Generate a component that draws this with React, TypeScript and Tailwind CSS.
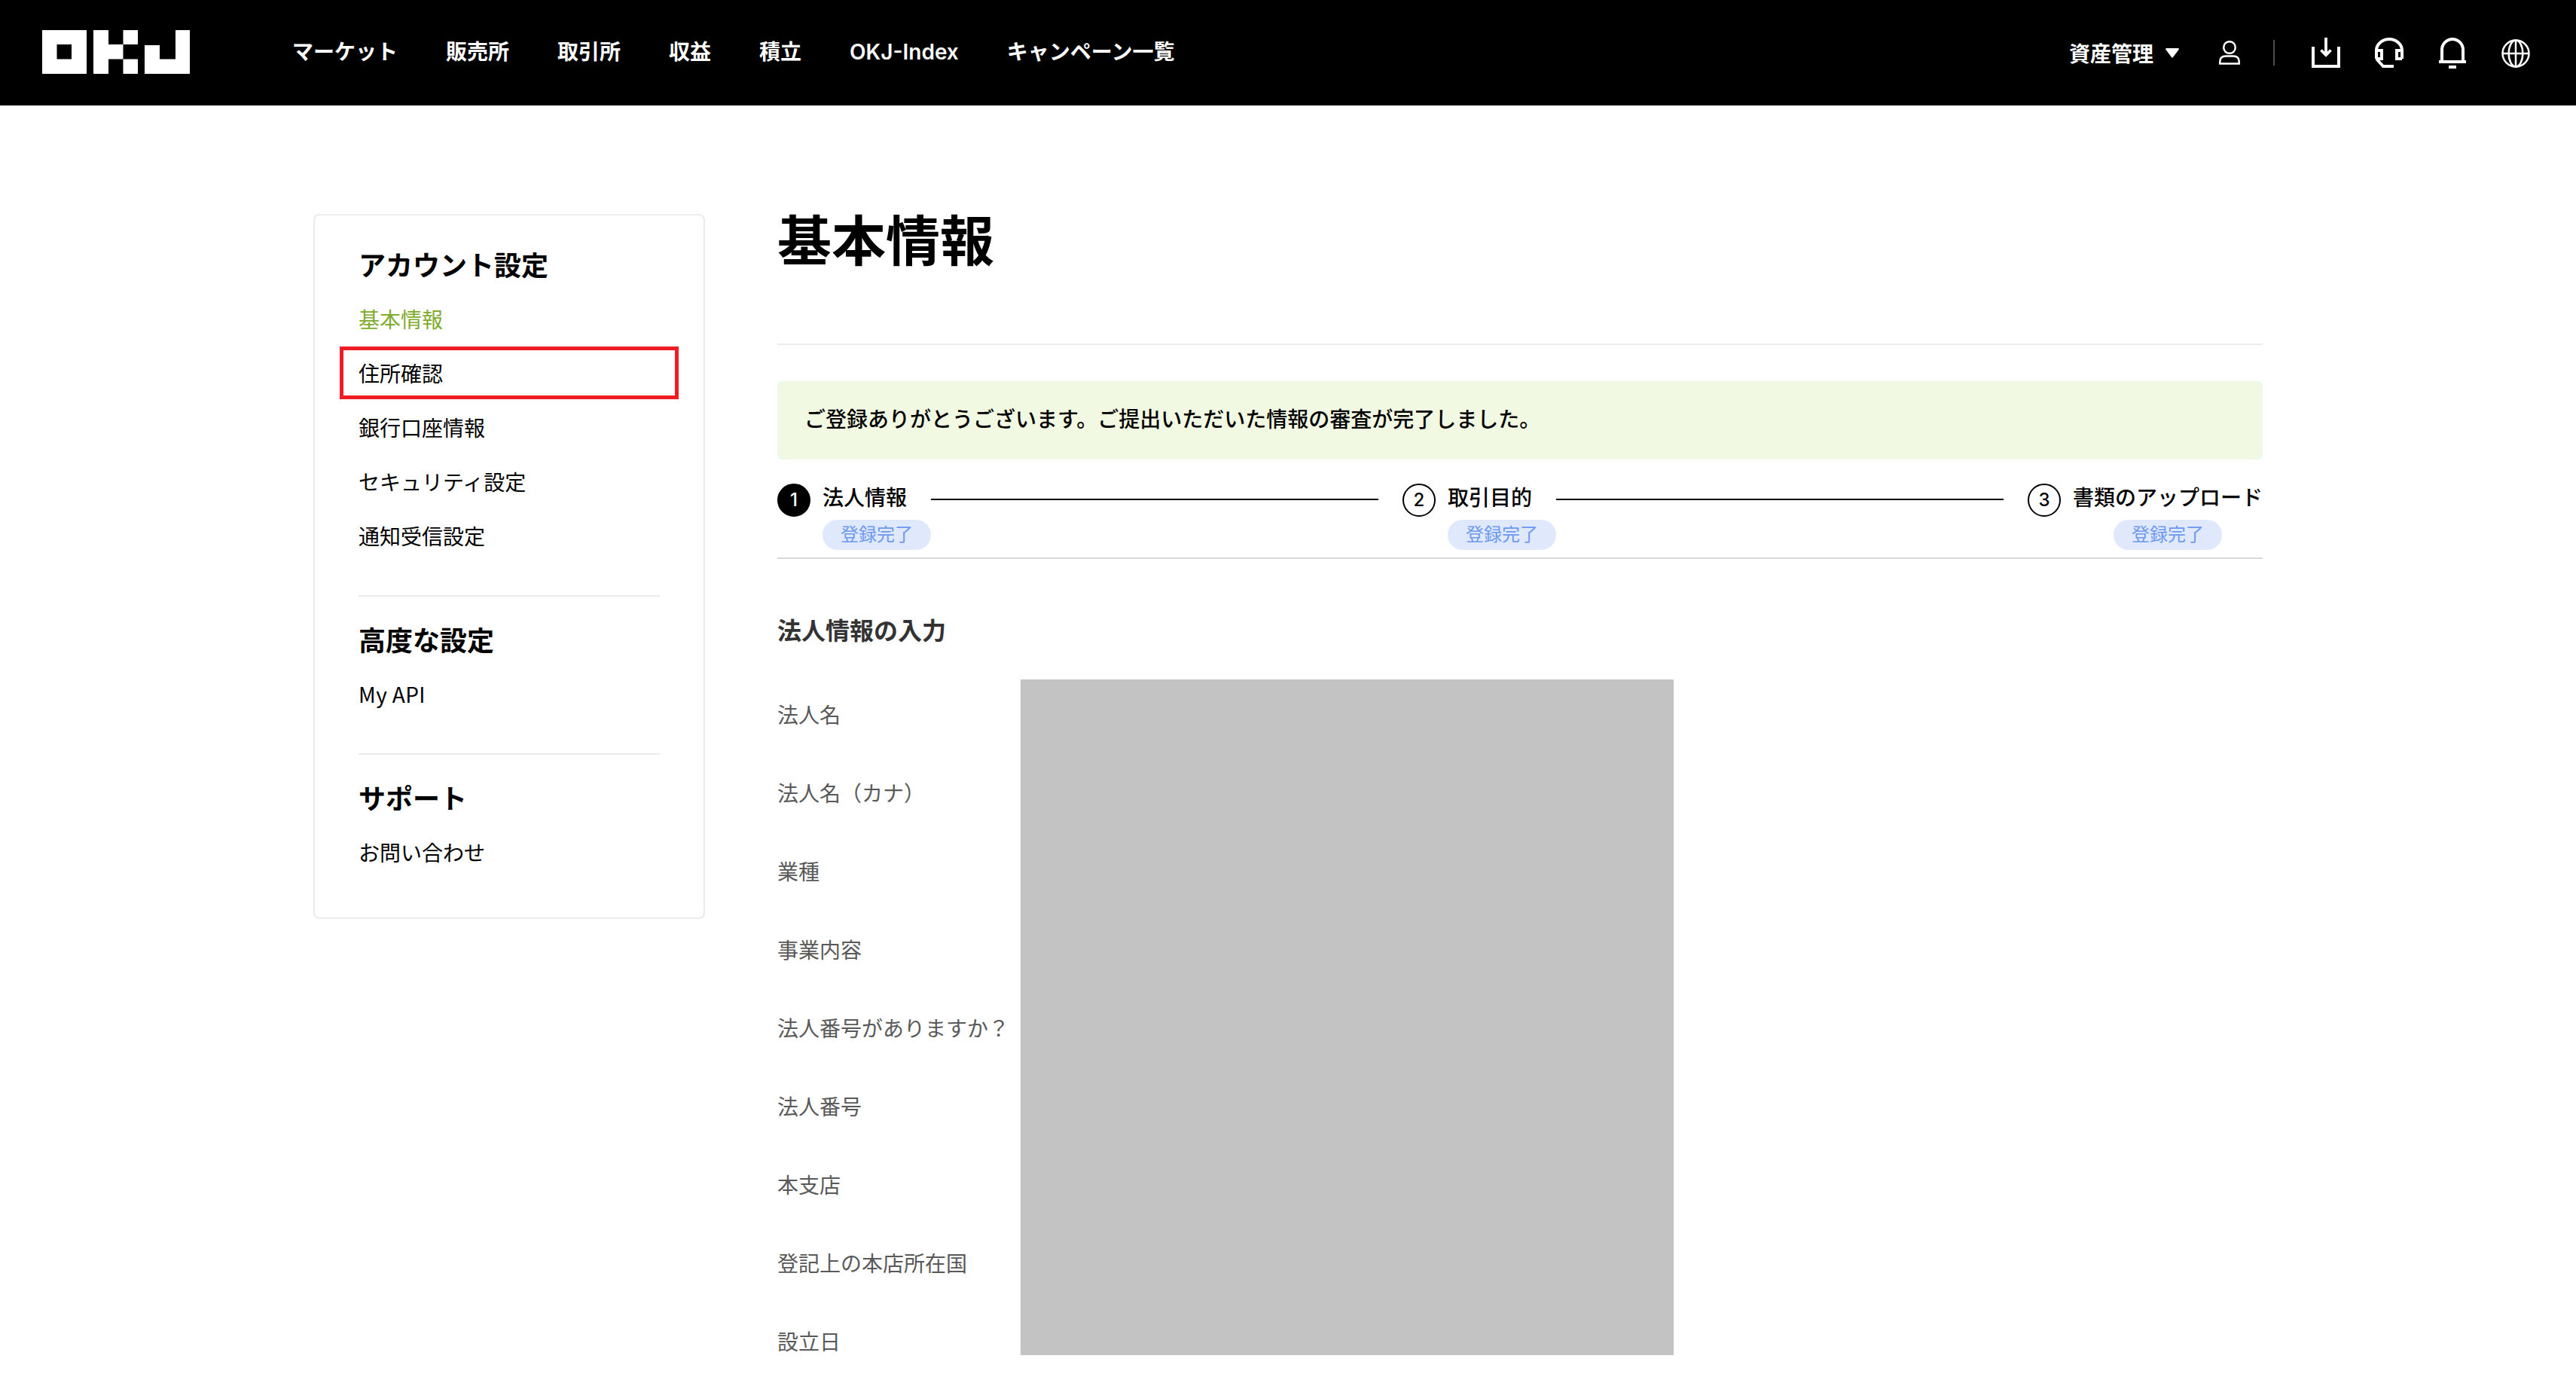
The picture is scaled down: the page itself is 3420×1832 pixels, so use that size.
const navItems = ["マーケット", "販売所", "取引所", "収益", "積立", "OKJ-Index", "キャンペーン一覧"];

const sections = [
  {
    title: "アカウント設定",
    items: ["基本情報", "住所確認", "銀行口座情報", "セキュリティ設定", "通知受信設定"],
  },
  { title: "高度な設定", items: ["My API"] },
  { title: "サポート", items: ["お問い合わせ"] },
];

const steps = ["法人情報", "取引目的", "書類のアップロード"];

const fields = [
  "法人名",
  "法人名（カナ）",
  "業種",
  "事業内容",
  "法人番号がありますか？",
  "法人番号",
  "本支店",
  "登記上の本店所在国",
  "設立日",
];

function Logo() {
  return (
    <svg className="-mt-0.5 h-[58px] w-[196px]" viewBox="0 0 196 58" fill="#fff">
      <path fillRule="evenodd" d="M0 0h59v58H0zM19.5 19v19.500h19.500V19z" />
      <path d="M68 0h20v19h19.500v19.500H88V58H68zM107.500 0H127v19h-19.500zM107.500 38.500H127V58h-19.500z" />
      <path d="M136 20h20v18.500h21V0h19v58h-60z" />
    </svg>
  );
}

function Header() {
  return (
    <header className="flex h-[140px] items-center bg-black pl-14 text-[28px] text-white">
      <Logo />
      <nav className="ml-[136px] flex gap-16 font-semibold leading-[40px]">
        {navItems.map((item) => (
          <a key={item} className="-mt-[3px] whitespace-nowrap">
            {item}
          </a>
        ))}
      </nav>
      <div className="ml-auto flex items-center">
        <span className="mt-1 font-semibold leading-[40px]">資産管理</span>
        <svg className="ml-4 mt-px h-[13px] w-[18px]" viewBox="0 0 18 13" fill="#fff">
          <path d="M1 0h16q1.500 0.500 0.500 2L10 12q-1 1-2 0L0.500 2Q-0.500 0.500 1 0z" />
        </svg>
        <svg className="ml-[53px] h-[32px] w-[28px]" viewBox="0 0 28 32" fill="none" stroke="#fff" strokeWidth="2.500">
          <circle cx="14" cy="9" r="7.800" />
          <path d="M1.300 30.600v-2.600q0-7.500 7.700-7.500h10q7.700 0 7.700 7.500v2.600z" />
        </svg>
        <div className="ml-11 h-[34px] w-[2px] bg-[#4d4d4d]" />
        <svg className="ml-[49px] h-[40px] w-[38px]" viewBox="0 0 38 40" fill="none" stroke="#fff" strokeWidth="4">
          <path d="M2 12v26h34V12" />
          <path d="M19 0v23M12.500 16.500l6.500 6.500 6.500-6.500" strokeWidth="3.800" />
        </svg>
        <svg className="ml-[46px] h-[40px] w-[38px]" viewBox="0 0 38 40" fill="none" stroke="#fff" strokeWidth="4">
          <path d="M2 28V17a17 15 0 0 1 34 0v11M2 28l9 10h14" />
          <path d="M2 17h7v11H2M36 17h-7v11h7" />
        </svg>
        <svg className="ml-[47px] h-[40px] w-[36px] overflow-visible" viewBox="0 0 36 40" fill="none" stroke="#fff" strokeWidth="4">
          <path d="M4 31V16a14 14 0 0 1 28 0v15M0 32h36M13 39h10" />
        </svg>
        <svg className="ml-[47px] mr-[61px] mt-0.5 h-[38px] w-[38px]" viewBox="0 0 38 38" fill="none" stroke="#fff" strokeWidth="2.500">
          <circle cx="19" cy="19" r="17.500" />
          <ellipse cx="19" cy="19" rx="9.300" ry="17.500" />
          <path d="M19 1v36M1 19h36" />
        </svg>
      </div>
    </header>
  );
}

function Sidebar() {
  return (
    <aside className="h-[936px] w-[520px] rounded-lg border-2 border-[#ebebeb] px-[58px] pt-[31px]">
      {sections.map((section, i) => (
        <section
          key={section.title}
          className={i > 0 ? "mt-[41px] border-t-2 border-[#ebebeb] pt-[23px]" : ""}
        >
          <h2 className="h-[72px] text-[36px] font-bold leading-[72px]">{section.title}</h2>
          {section.items.map((item) => (
            <div
              key={item}
              className={`relative h-[72px] text-[28px] leading-[72px] ${
                item === "基本情報" ? "text-[#7fab2f]" : ""
              }`}
            >
              {item === "住所確認" && (
                <div className="absolute -left-[25px] -top-px h-[70px] w-[450px] border-[5px] border-[#ee1c25]" />
              )}
              {item === "My API" ? (
                <span className="font-['Noto_Sans_CJK_JP',sans-serif] leading-none tracking-[0.4px]">{item}</span>
              ) : (
                item
              )}
            </div>
          ))}
        </section>
      ))}
    </aside>
  );
}

function Steps() {
  return (
    <div className="mt-8 flex h-[100px] border-b-2 border-[#d8d8d8]">
      {steps.map((step, i) => (
        <div key={step} className={i < 2 ? "flex w-[830px]" : "flex"}>
          <div
            className={`flex h-[44px] w-[44px] items-center justify-center rounded-full border-2 border-black text-[24px] font-medium ${
              i === 0 ? "bg-black text-white" : "bg-white"
            }`}
          >
            {i + 1}
          </div>
          <div className={`ml-4 flex flex-col ${i === 2 ? "items-center" : "items-start"}`}>
            <div className="h-12 whitespace-nowrap text-[28px] font-medium leading-[39px]">{step}</div>
            <div className="h-10 w-[144px] rounded-[20px] bg-[#e0e8fb] text-center text-[24px] leading-[40px] text-[#6b99f0]">
              登録完了
            </div>
          </div>
          {i < 2 && <div className="mt-5 h-[2px] w-[594px] shrink-0 bg-black" />}
        </div>
      ))}
    </div>
  );
}

export default function App() {
  return (
    <div
      lang="ja"
      className="h-[1832px] w-[3420px] overflow-hidden bg-white font-['Inter','Noto_Sans_CJK_JP',sans-serif] text-black"
    >
      <Header />
      <div className="flex pl-[416px] pt-36">
        <Sidebar />
        <main className="ml-24 w-[1972px]">
          <h1 className="h-[174px] border-b-2 border-[#ebebeb] text-[72px] font-bold leading-[72px]">
            基本情報
          </h1>
          <div className="mt-12 rounded-lg bg-[#e1f6ea]">
            <div className="h-[104px] rounded-xl bg-[#f2f9e2] px-9 text-[28px] font-medium leading-[102px]">
              ご登録ありがとうございます。ご提出いただいた情報の審査が完了しました。
            </div>
          </div>
          <Steps />
          <h3 className="mt-18 text-[32px] font-semibold leading-[48px] text-[#333]">法人情報の入力</h3>
          <div className="mt-10 flex">
            <div className="-mt-1 w-[323px]">
              {fields.map((field) => (
                <div key={field} className="h-[104px] whitespace-nowrap text-[28px] leading-[104px] text-[#595959]">
                  {field}
                </div>
              ))}
            </div>
            <div className="h-[897px] w-[867px] bg-[#c3c3c3]" />
          </div>
        </main>
      </div>
    </div>
  );
}
